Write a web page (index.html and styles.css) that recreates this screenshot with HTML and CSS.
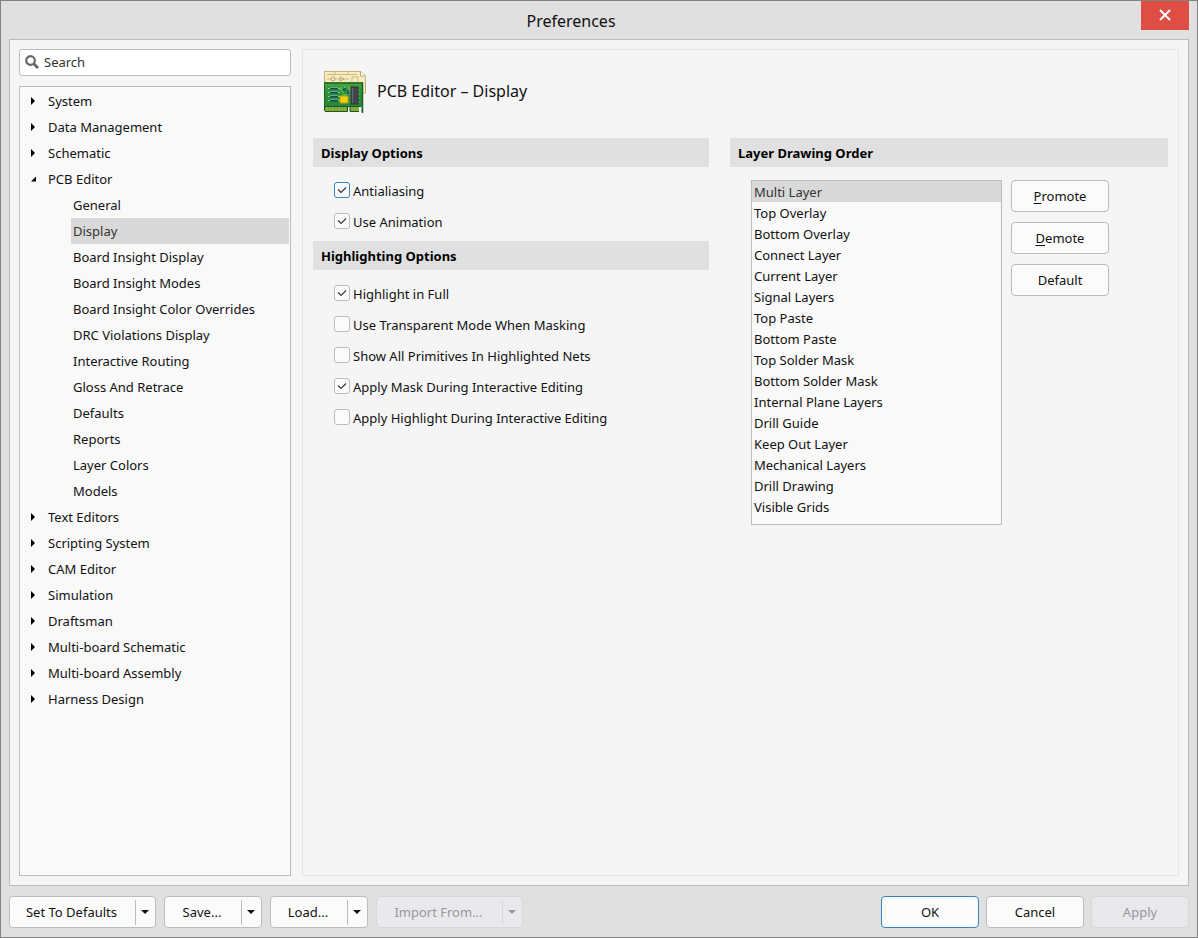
FILE: index.html
```html
<!DOCTYPE html>
<html lang="en">
<head>
    <meta charset="UTF-8">
    <meta name="viewport" content="width=device-width, initial-scale=1.0">
    <title>Preferences</title>
    <link rel="stylesheet" href="styles.css">
</head>
<body>
    <header class="title-bar">
        <h1>Preferences</h1>
        <button type="button" class="close-button" aria-label="Close">
            <svg width="12" height="12" viewBox="0 0 12 12">
                <path d="M1 1L11 11M11 1L1 11" stroke="#fff" stroke-width="2"/>
            </svg>
        </button>
    </header>

    <main class="panel">
        <aside class="sidebar">
            <div class="search-box">
                <svg width="14" height="14" viewBox="0 0 14 14" fill="none" stroke="#666">
                    <circle cx="5.5" cy="5.5" r="4.3" stroke-width="2.2"/>
                    <path d="M8.8 8.8L13 13" stroke-width="2.8"/>
                </svg>
                <input type="text" id="search" placeholder="Search" aria-label="Search">
            </div>
            <nav class="tree">
                <ul>
                    <li><button type="button" class="node">System</button></li>
                    <li><button type="button" class="node">Data Management</button></li>
                    <li><button type="button" class="node">Schematic</button></li>
                    <li>
                        <button type="button" class="node expanded" aria-expanded="true">PCB Editor</button>
                        <ul class="children">
                            <li><a href="#general">General</a></li>
                            <li><a href="#display" class="selected">Display</a></li>
                            <li><a href="#insight-display">Board Insight Display</a></li>
                            <li><a href="#insight-modes">Board Insight Modes</a></li>
                            <li><a href="#insight-colors">Board Insight Color Overrides</a></li>
                            <li><a href="#drc">DRC Violations Display</a></li>
                            <li><a href="#routing">Interactive Routing</a></li>
                            <li><a href="#gloss">Gloss And Retrace</a></li>
                            <li><a href="#defaults">Defaults</a></li>
                            <li><a href="#reports">Reports</a></li>
                            <li><a href="#layer-colors">Layer Colors</a></li>
                            <li><a href="#models">Models</a></li>
                        </ul>
                    </li>
                    <li><button type="button" class="node">Text Editors</button></li>
                    <li><button type="button" class="node">Scripting System</button></li>
                    <li><button type="button" class="node">CAM Editor</button></li>
                    <li><button type="button" class="node">Simulation</button></li>
                    <li><button type="button" class="node">Draftsman</button></li>
                    <li><button type="button" class="node">Multi-board Schematic</button></li>
                    <li><button type="button" class="node">Multi-board Assembly</button></li>
                    <li><button type="button" class="node">Harness Design</button></li>
                </ul>
            </nav>
        </aside>

        <section class="page">
            <div class="page-title">
                <svg width="44" height="44" viewBox="0 0 44 44">
                    <defs>
                        <linearGradient id="board" x1="0" y1="0" x2="0" y2="1">
                            <stop offset="0" stop-color="#4aa83c"/>
                            <stop offset="0.3" stop-color="#2f9136"/>
                            <stop offset="1" stop-color="#23853a"/>
                        </linearGradient>
                    </defs>
                    <!-- schematic sheet -->
                    <path d="M1.5 1.5H38L42.5 6V23H1.5Z" fill="#f7ebbd" stroke="#c3b281"/>
                    <path d="M37.5 1.5V6H42.5" fill="#fffbe8" stroke="#b9a876"/>
                    <path d="M4 4.5H34M3.5 9H8M12 9H17M21 9H26M29 12V7H35V12M12 5V2M25 5V2" fill="none" stroke="#cdbb84"/>
                    <circle cx="10" cy="9" r="2" fill="none" stroke="#b7a471"/>
                    <path d="M17 7L21 9L17 11Z" fill="none" stroke="#b7a471"/>
                    <!-- board -->
                    <path d="M1 12.5H40V42H38.5V36H1Z" fill="url(#board)"/>
                    <path d="M1 13H39.5V43" fill="none" stroke="#1b5f2c" stroke-width="1.5"/>
                    <path d="M1.5 13V41" stroke="#176529"/>
                    <path d="M2 36H24V42H2ZM27 36H36V42H27Z" fill="#6f9f32"/>
                    <path d="M4 36V41M7 36V41M10 36V41M13 36V41M16 36V41M19 36V41M22 36V41M29 36V41M32 36V41M35 36V41" stroke="#b3bb42"/>
                    <path d="M1 36.5H38M2 41.5H24.5V37M27 37V41.5H36" fill="none" stroke="#1b5524"/>
                    <path d="M7 18.5H15M7 22.5H15M7 26.5H15M7 30.5H15" stroke="#174f50" stroke-width="2"/>
                    <path d="M5 18.5H7M15 18.5H17M5 22.5H7M15 22.5H17M5 26.5H7M15 26.5H17M5 30.5H7M15 30.5H17" stroke="#91d37c"/>
                    <path d="M7 17.5H15M7 21.5H15M7 25.5H15M7 29.5H15" stroke="#5fa59a"/>
                    <path d="M18 17V20L21 23M22 16V20M26 16V22L23 25M19 25H24" fill="none" stroke="#74c965"/>
                    <rect x="20" y="18" width="3" height="3" fill="#176273"/>
                    <rect x="24" y="20" width="2" height="4" fill="#176273"/>
                    <path d="M26.5 20H36.5M26.5 24H36.5M26.5 28H36.5M26.5 32H36.5" stroke="#84c274"/>
                    <rect x="28" y="17" width="7" height="17" fill="#43464d" stroke="#30343a"/>
                    <path d="M29.5 18V33" stroke="#646872"/>
                    <rect x="17" y="26" width="8" height="7" fill="#f2cf0d" stroke="#a6a117"/>
                </svg>
                <h2>PCB Editor – Display</h2>
            </div>

            <div class="columns">
                <div class="column">
                    <h3>Display Options</h3>
                    <div class="options">
                        <label><input type="checkbox" class="hot" checked>Antialiasing</label>
                        <label><input type="checkbox" checked>Use Animation</label>
                    </div>
                    <h3>Highlighting Options</h3>
                    <div class="options">
                        <label><input type="checkbox" checked>Highlight in Full</label>
                        <label><input type="checkbox">Use Transparent Mode When Masking</label>
                        <label><input type="checkbox">Show All Primitives In Highlighted Nets</label>
                        <label><input type="checkbox" checked>Apply Mask During Interactive Editing</label>
                        <label><input type="checkbox">Apply Highlight During Interactive Editing</label>
                    </div>
                </div>

                <div class="column">
                    <h3 id="layerOrder">Layer Drawing Order</h3>
                    <div class="layer-order">
                        <select size="16" aria-labelledby="layerOrder">
                            <option selected>Multi Layer</option>
                            <option>Top Overlay</option>
                            <option>Bottom Overlay</option>
                            <option>Connect Layer</option>
                            <option>Current Layer</option>
                            <option>Signal Layers</option>
                            <option>Top Paste</option>
                            <option>Bottom Paste</option>
                            <option>Top Solder Mask</option>
                            <option>Bottom Solder Mask</option>
                            <option>Internal Plane Layers</option>
                            <option>Drill Guide</option>
                            <option>Keep Out Layer</option>
                            <option>Mechanical Layers</option>
                            <option>Drill Drawing</option>
                            <option>Visible Grids</option>
                        </select>
                        <div class="layer-buttons">
                            <button type="button" class="btn"><u>P</u>romote</button>
                            <button type="button" class="btn"><u>D</u>emote</button>
                            <button type="button" class="btn">Default</button>
                        </div>
                    </div>
                </div>
            </div>
        </section>
    </main>

    <footer class="footer">
        <div class="split wide">
            <button type="button" class="split-main">Set To Defaults</button>
            <button type="button" class="split-arrow" aria-label="Set To Defaults options"></button>
        </div>
        <div class="split">
            <button type="button" class="split-main">Save...</button>
            <button type="button" class="split-arrow" aria-label="Save options"></button>
        </div>
        <div class="split">
            <button type="button" class="split-main">Load...</button>
            <button type="button" class="split-arrow" aria-label="Load options"></button>
        </div>
        <div class="split wide disabled">
            <button type="button" class="split-main" disabled>Import From...</button>
            <button type="button" class="split-arrow" aria-label="Import From options" disabled></button>
        </div>
        <div class="dialog-buttons">
            <button type="button" class="btn primary">OK</button>
            <button type="button" class="btn">Cancel</button>
            <button type="button" class="btn" disabled>Apply</button>
        </div>
    </footer>
</body>
</html>
```
FILE: styles.css
```css
:root {
    --window-bg: #e0e0e0;
    --panel-bg: #f5f5f5;
    --list-bg: #f9f9f9;
    --button-bg: #fbfbfb;
    --border-color: #bbbcbc;
    --selected-bg: #d9d9d9;
    --accent: #3c82c0;
    --text-color: #111;
}

* {
    box-sizing: border-box;
}

body {
    margin: 0;
    min-height: 100vh;
    display: flex;
    flex-direction: column;
    border: 1px solid #828282;
    background-color: var(--window-bg);
    color: var(--text-color);
    font-family: "Noto Sans", "Open Sans", sans-serif;
    font-size: 13px;
    line-height: 20px;
}

button,
input,
select {
    font: inherit;
    color: inherit;
}

h1,
h2,
h3,
ul {
    margin: 0;
    padding: 0;
}

ul {
    list-style: none;
}

/* Title bar */
.title-bar {
    display: flex;
    height: 38px;
    padding-right: 8px;
}

.title-bar h1 {
    flex: 1;
    font-size: 16px;
    font-weight: 400;
    line-height: 40px;
    text-align: center;
}

.close-button {
    display: flex;
    align-items: center;
    justify-content: center;
    width: 48px;
    height: 29px;
    padding: 0 0 2px;
    border: none;
    background-color: #df4e45;
}

/* Main panel */
.panel {
    flex: 1;
    display: flex;
    gap: 11px;
    margin: 0 8px;
    padding: 9px;
    border: 1px solid var(--border-color);
    background-color: var(--panel-bg);
}

.sidebar {
    flex: none;
    width: 272px;
    display: flex;
    flex-direction: column;
    gap: 10px;
}

.search-box {
    display: flex;
    align-items: center;
    gap: 5px;
    height: 27px;
    padding: 0 5px 2px;
    border: 1px solid var(--border-color);
    border-radius: 3px;
    background-color: #fff;
}

.search-box input {
    flex: 1;
    min-width: 0;
    padding: 0;
    border: none;
    outline: none;
    background: none;
}

.search-box input::placeholder {
    color: #333;
}

.tree {
    flex: 1;
    padding: 1px;
    border: 1px solid var(--border-color);
    background-color: var(--list-bg);
}

.node {
    display: flex;
    align-items: center;
    width: 100%;
    height: 26px;
    padding: 0 0 0 10px;
    border: none;
    background: none;
    text-align: left;
}

.node::before {
    content: "";
    width: 4px;
    height: 8px;
    margin-right: 13px;
    background-color: #000;
    clip-path: polygon(0 0, 100% 50%, 0 100%);
}

.node.expanded::before {
    width: 5px;
    height: 5px;
    margin-right: 12px;
    clip-path: polygon(100% 0, 100% 100%, 0 100%);
}

.children {
    padding-left: 50px;
}

.children a {
    display: block;
    padding: 3px 2px;
    color: inherit;
    text-decoration: none;
}

.children a.selected {
    background-color: var(--selected-bg);
    color: #333;
}

/* Settings page */
.page {
    flex: 1;
    padding: 20px 10px;
    border: 1px solid #e5e5e5;
}

.page-title {
    display: flex;
    align-items: center;
    gap: 10px;
    padding-left: 10px;
    margin-bottom: 24px;
}

.page-title h2 {
    padding-bottom: 2px;
    font-size: 16px;
    font-weight: 400;
}

.columns {
    display: grid;
    grid-template-columns: 396fr 438fr;
    gap: 21px;
}

h3 {
    padding: 5px 8px 4px;
    background-color: var(--window-bg);
    color: #000;
    font-size: 13px;
    font-weight: 700;
}

.options {
    padding: 8px 0 4px 21px;
}

.options label {
    display: flex;
    align-items: center;
    gap: 3px;
    height: 31px;
}

.options input {
    appearance: none;
    width: 16px;
    height: 16px;
    margin: 0 0 2px;
    border: 1px solid var(--border-color);
    border-radius: 3px;
    background-color: var(--button-bg);
}

.options input.hot {
    border-color: var(--accent);
}

.options input:checked {
    background-image: url("data:image/svg+xml,%3Csvg xmlns='http://www.w3.org/2000/svg' viewBox='0 0 14 14'%3E%3Cpath d='M3 6.5L6 9.5L11 4.5' fill='none' stroke='%23333' stroke-width='1.1'/%3E%3C/svg%3E");
}

.layer-order {
    display: flex;
    align-items: flex-start;
    gap: 9px;
    padding: 13px 0 0 21px;
}

.layer-order select {
    width: 251px;
    height: 345px;
    padding: 0;
    border: 1px solid var(--border-color);
    border-radius: 0;
    outline: none;
    background-color: var(--list-bg);
    overflow: hidden;
}

.layer-order option {
    height: 21px;
    padding: 2px 2px 0;
    line-height: 20px;
}

.layer-order option:checked {
    background: var(--selected-bg) linear-gradient(var(--selected-bg), var(--selected-bg));
    color: #333;
}

.layer-buttons {
    display: flex;
    flex-direction: column;
    gap: 10px;
}

/* Buttons */
.btn {
    width: 98px;
    height: 32px;
    padding: 0;
    border: 1px solid var(--border-color);
    border-radius: 4px;
    background-color: var(--button-bg);
}

.btn u {
    text-underline-offset: 2px;
}

.btn.primary {
    border-color: var(--accent);
}

.btn:disabled,
.split.disabled {
    border-color: #d6d7da;
    background-color: #e9e9ec;
    color: #96979b;
}

.footer {
    display: flex;
    gap: 8px;
    padding: 10px 8px 9px;
}

.split {
    display: flex;
    align-items: center;
    width: 98px;
    height: 32px;
    border: 1px solid var(--border-color);
    border-radius: 4px;
    background-color: var(--button-bg);
}

.split.wide {
    width: 147px;
}

.split button {
    padding: 0;
    border: none;
    background: none;
}

.split .split-main {
    flex: 1;
    padding-right: 2px;
}

.split .split-arrow {
    display: flex;
    align-items: center;
    justify-content: center;
    width: 20px;
    height: 25px;
    padding-right: 2px;
    border-left: 1px solid var(--border-color);
}

.split-arrow::before {
    content: "";
    border: 4px solid transparent;
    border-top-color: currentColor;
    border-bottom: none;
}

.split.disabled .split-arrow {
    border-left-color: #d6d7da;
}

.dialog-buttons {
    display: flex;
    gap: 7px;
    margin-left: auto;
}
```
